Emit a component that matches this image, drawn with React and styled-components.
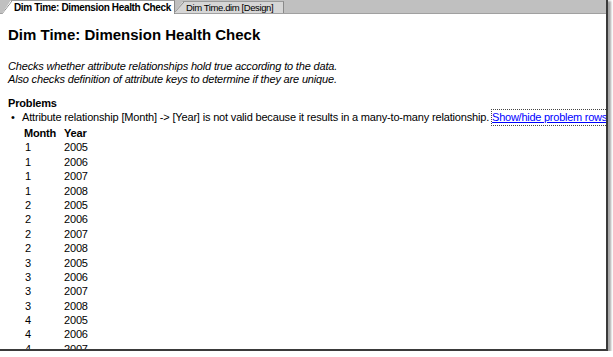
import styled, { createGlobalStyle } from "styled-components";

const Global = createGlobalStyle`
  body {
    margin: 0;
    background: #fff;
    font-family: "Liberation Sans", Arial, sans-serif;
  }
`;

const Frame = styled.div`
  width: 606px;
  height: 349px;
  overflow: hidden;
  background: #fff;
  border-right: 2px solid #3a3a3a;
  border-bottom: 2px solid #3a3a3a;
  box-shadow: 2px 2px 2px 1px rgba(0, 0, 0, 0.35);
  display: flex;
  flex-direction: column;
`;

const TabStrip = styled.div`
  height: 13px;
  flex: none;
  background: #c0c0c0;
  border-bottom: 1px solid #a0a0a0;
  display: flex;
  align-items: flex-end;
  padding-left: 2px;
`;

const Tab = styled.div`
  position: relative;
  height: ${(p) => (p.$active ? "13px" : "11px")};
  margin-bottom: ${(p) => (p.$active ? "-1px" : "0")};
  margin-left: ${(p) => (p.$active ? "0" : "-1px")};
  padding: 0 ${(p) => (p.$active ? "3px" : "10px")} 0 12px;
  background: ${(p) => (p.$active ? "#fff" : "#d6d6d6")};
  border-top: 1px solid #9a9a9a;
  border-right: 1px solid #8a8a8a;
  font-size: ${(p) => (p.$active ? "10px" : "9.5px")};
  line-height: ${(p) => (p.$active ? "13px" : "11px")};
  font-weight: ${(p) => (p.$active ? "bold" : "normal")};
  color: #000;
  white-space: nowrap;
  letter-spacing: ${(p) => (p.$active ? "-0.35px" : "-0.4px")};
  clip-path: polygon(9px 0, 100% 0, 100% 100%, 0 100%);
  &::before {
    content: "";
    position: absolute;
    left: 0;
    top: 0;
    width: 10px;
    height: 100%;
    background: linear-gradient(to top left, transparent calc(50% - 0.7px), #8a8a8a 50%, transparent calc(50% + 0.7px));
  }
`;

const Content = styled.div`
  padding: 12px 8px 0 8px;
  font-size: 11px;
  letter-spacing: -0.17px;
  color: #000;
`;

const Title = styled.h1`
  margin: 0 0 16px 0;
  font-size: 15px;
  line-height: 18px;
  font-weight: bold;
  letter-spacing: 0;
`;

const Desc = styled.p`
  margin: 0 0 11px 0;
  font-style: italic;
  line-height: 13px;
`;

const Section = styled.div`
  font-weight: bold;
  line-height: 13px;
`;

const Bullet = styled.div`
  display: flex;
  line-height: 15px;
  white-space: nowrap;
  &::before {
    content: "•";
    width: 11px;
    padding-left: 3px;
    flex: none;
  }
`;

const Link = styled.a`
  margin-left: 3px;
  color: #0000ff;
  text-decoration: underline;
  letter-spacing: -0.25px;
  outline: 1px dotted #444;
  outline-offset: 0;
`;

const Table = styled.div`
  display: grid;
  grid-template-columns: 40px 40px;
  grid-auto-rows: 14.4px;
  margin-top: 1px;
  padding-left: 16px;
  line-height: 14.4px;
`;

const Head = styled.div`
  font-weight: bold;
`;

const Cell = styled.div`
  padding-left: ${(p) => (p.$num ? "1px" : "0")};
`;

const rows = [];
[1, 2, 3, 4].forEach((m) => [2005, 2006, 2007, 2008].forEach((y) => rows.push([m, y])));

export default function App() {
  return (
    <>
      <Global />
      <Frame>
        <TabStrip>
          <Tab $active>Dim Time: Dimension Health Check</Tab>
          <Tab>Dim Time.dim [Design]</Tab>
        </TabStrip>
        <Content>
          <Title>Dim Time: Dimension Health Check</Title>
          <Desc>
            Checks whether attribute relationships hold true according to the data.
            <br />
            Also checks definition of attribute keys to determine if they are unique.
          </Desc>
          <Section>Problems</Section>
          <Bullet>
            Attribute relationship [Month] -&gt; [Year] is not valid because it results in a many-to-many relationship.
            <Link href="#">Show/hide problem rows</Link>
          </Bullet>
          <Table>
            <Head>Month</Head>
            <Head>Year</Head>
            {rows.map(([m, y], i) => [
              <Cell key={"m" + i} $num>{m}</Cell>,
              <Cell key={"y" + i}>{y}</Cell>,
            ])}
          </Table>
        </Content>
      </Frame>
    </>
  );
}
